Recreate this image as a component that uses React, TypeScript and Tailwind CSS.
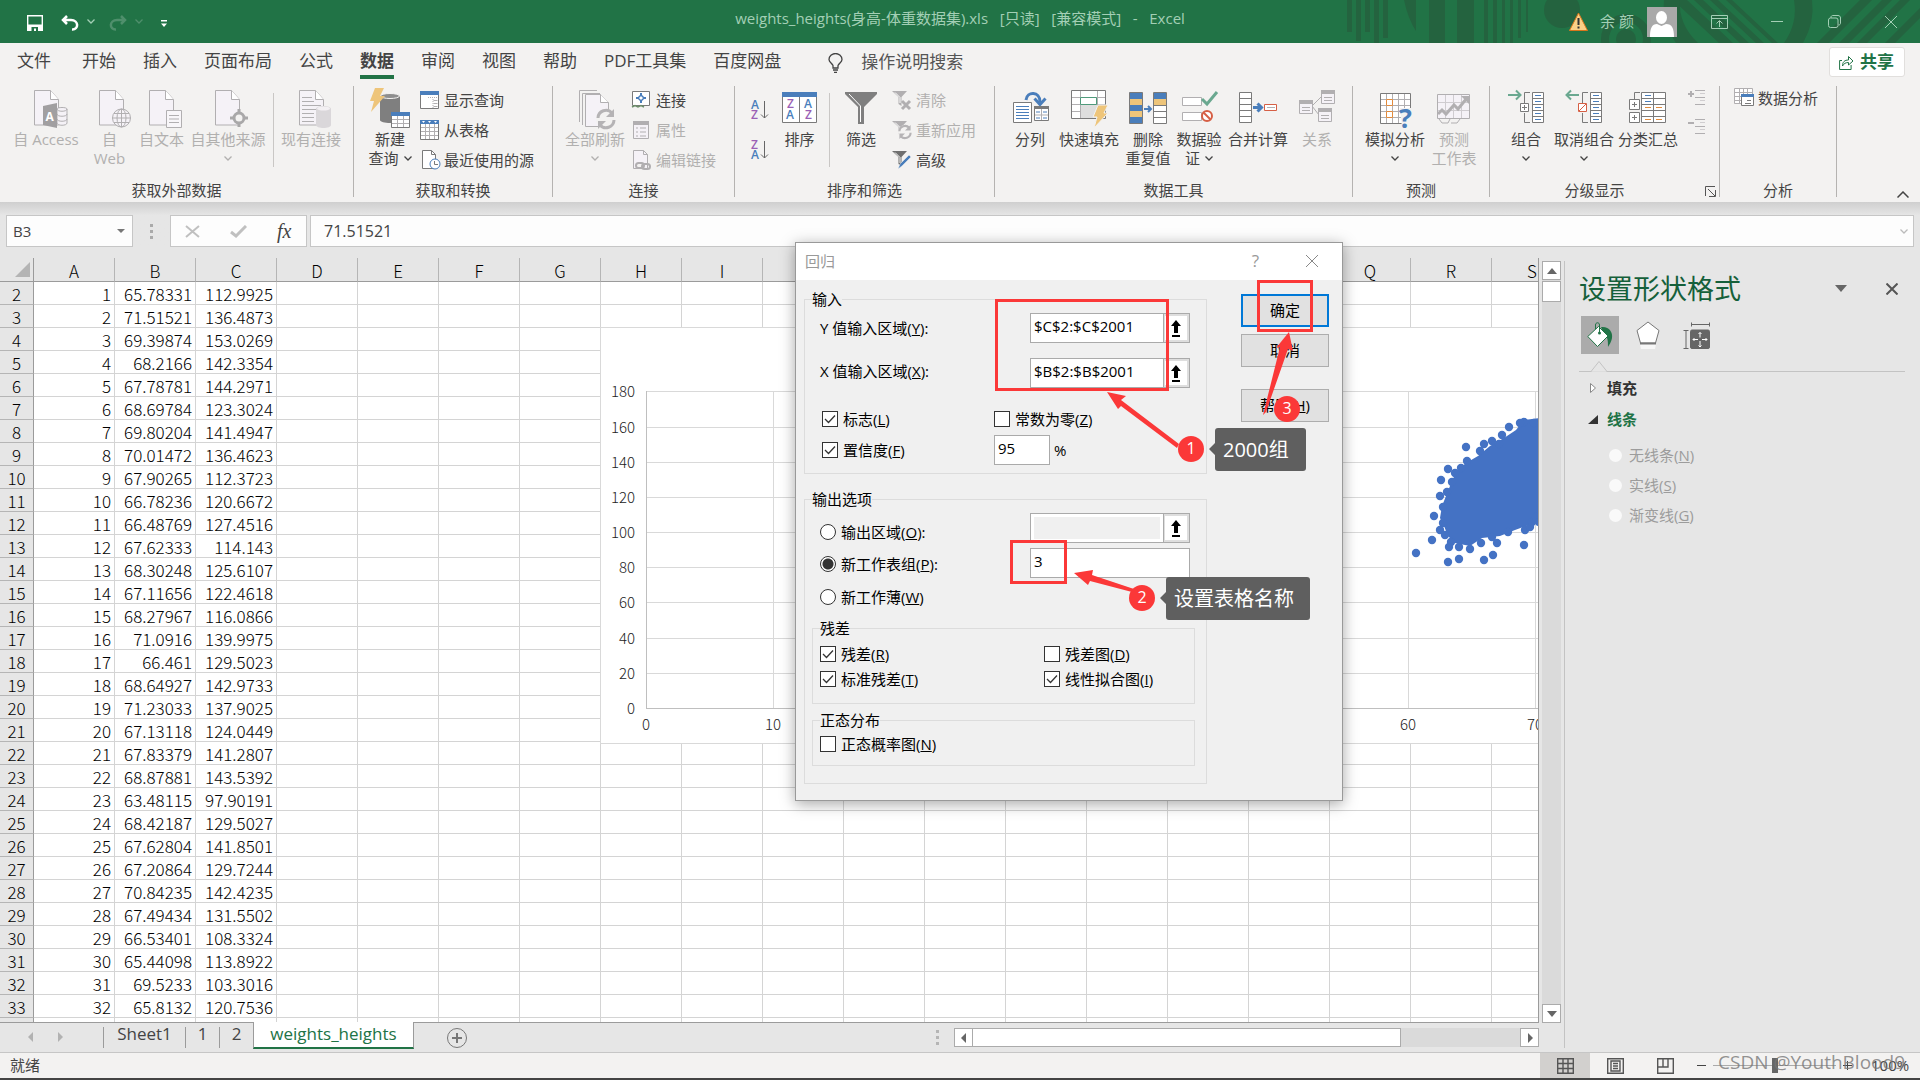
import { ReactNode, useState } from "react";
import clsx from "clsx";

const UI_FONT = "font-['Open_Sans','Noto_Sans_CJK_SC',sans-serif]";
const CELL_FONT = "font-['Noto_Sans_CJK_SC',sans-serif] font-light";

const COLUMNS = "ABCDEFGHIJKLMNOPQRS".split("");

const ROWS: [string, string][] = [
  ["65.78331", "112.9925"],
  ["71.51521", "136.4873"],
  ["69.39874", "153.0269"],
  ["68.2166", "142.3354"],
  ["67.78781", "144.2971"],
  ["68.69784", "123.3024"],
  ["69.80204", "141.4947"],
  ["70.01472", "136.4623"],
  ["67.90265", "112.3723"],
  ["66.78236", "120.6672"],
  ["66.48769", "127.4516"],
  ["67.62333", "114.143"],
  ["68.30248", "125.6107"],
  ["67.11656", "122.4618"],
  ["68.27967", "116.0866"],
  ["71.0916", "139.9975"],
  ["66.461", "129.5023"],
  ["68.64927", "142.9733"],
  ["71.23033", "137.9025"],
  ["67.13118", "124.0449"],
  ["67.83379", "141.2807"],
  ["68.87881", "143.5392"],
  ["63.48115", "97.90191"],
  ["68.42187", "129.5027"],
  ["67.62804", "141.8501"],
  ["67.20864", "129.7244"],
  ["70.84235", "142.4235"],
  ["67.49434", "131.5502"],
  ["66.53401", "108.3324"],
  ["65.44098", "113.8922"],
  ["69.5233", "103.3016"],
  ["65.8132", "120.7536"],
];

const POINTS = [
  [1524, 422], [1520, 423], [1509, 427], [1534, 423], [1502, 435], [1492, 441],
  [1484, 444], [1499, 444], [1480, 451], [1467, 461], [1461, 468], [1455, 473],
  [1452, 482], [1447, 492], [1440, 496], [1443, 507], [1434, 516], [1443, 523],
  [1440, 530], [1445, 535], [1451, 542], [1449, 547], [1459, 547], [1470, 549],
  [1481, 543], [1497, 543], [1492, 537], [1508, 532], [1525, 530], [1530, 527],
  [1532, 522], [1536, 517], [1539, 522], [1466, 447], [1448, 469], [1441, 480],
  [1432, 540], [1416, 553], [1448, 562], [1459, 559], [1484, 560], [1493, 555],
  [1524, 545],
];

/* ---------- icons ---------- */

const GREY = "#7a7a7a";
const PALE = "#b1afb1";
const BLUE = "#4a7ebb";
const ORANGE = "#e28b3c";
const RED = "#d65f45";
const SAND = "#eec57a";
const TEAL = "#6aa890";

function Icon({ children, small }: { children: ReactNode; small?: boolean }) {
  return (
    <svg
      className={clsx("shrink-0 overflow-visible", small ? "w-5 h-5" : "w-10 h-10")}
      viewBox={small ? "0 0 20 20" : "0 0 40 40"}
      fill="none"
      aria-hidden="true"
    >
      {children}
    </svg>
  );
}

function Doc({ x = 8, y = 2 }: { x?: number; y?: number }) {
  return (
    <g transform={`translate(${x} ${y})`} stroke={PALE}>
      <path d="M.5.5h16l8 9v25.500h-24z" fill="#f5f2f7" />
      <path d="M16.500.5v9h8" fill="#fff" />
    </g>
  );
}

const AccessIcon = () => (
  <Icon>
    <Doc />
    <path d="M31 21c0-2 10-2 10 0v14c0 3-10 3-10 0z" fill="#f5f2f7" stroke={PALE} />
    <path d="M31 21c0 3 10 3 10 0M31 26c0 3 10 3 10 0M31 31c0 3 10 3 10 0" stroke={PALE} />
    <path d="M17 18l14-3v25l-14-3z" fill="#a19fa1" />
    <text x="19.500" y="33" fontSize="12" fontWeight="700" fill="#fff">A</text>
  </Icon>
);

const WebIcon = () => (
  <Icon>
    <Doc x={9} />
    <circle cx="31.500" cy="30" r="9" fill="#f5f2f7" stroke={PALE} />
    <ellipse cx="31.500" cy="30" rx="4.500" ry="9" stroke={PALE} />
    <path d="M31.500 21v18M22.500 30h18M24 25.500h15M24 34.500h15" stroke={PALE} />
  </Icon>
);

const TextIcon = () => (
  <Icon>
    <Doc x={7} />
    <path d="M24.500 22.500h15v17h-15z" fill="#f8f6f9" stroke={PALE} />
    <path d="M27 27.500h10M27 31h10M27 34.500h10" stroke={PALE} />
  </Icon>
);

const SourceIcon = () => (
  <Icon>
    <Doc x={7} />
    <circle cx="31" cy="30" r="5" fill="#f3f2f1" stroke="#a9a8a9" strokeWidth="3" />
    <path d="M31 21v5M31 34v5M22 30h5M35 30h5" stroke="#a9a8a9" strokeWidth="3" />
  </Icon>
);

const ExistingIcon = () => (
  <Icon>
    <Doc />
    <path d="M11 9.500h10M11 13.500h12M11 17.500h19M11 21.500h14M11 25.500h12M11 29.500h12M11 33.500h12" stroke={PALE} />
    <path d="M25 21c0-4 15-4 15 0v16c0 4-15 4-15 0z" fill="#dad7da" />
    <ellipse cx="32.500" cy="20.500" rx="6.500" ry="2" fill="#f3f0f3" />
  </Icon>
);

const NewQueryIcon = () => (
  <Icon>
    <path d="M10 8h20v24c0 4-20 4-20 0z" fill="#7f7f7f" />
    <ellipse cx="20" cy="8" rx="9.500" ry="2.500" fill="#8e8e8e" stroke="#f3f2f1" />
    <path d="M5 0h9l-4 8h5L1 24l3-11H0z" fill={SAND} />
    <path d="M21.500 24.500h18v15h-18z" fill="#fff" stroke={GREY} />
    <path d="M21 24h19v4H21z" fill={BLUE} />
    <path d="M22 31.500h17M22 35.500h17M27.500 28v11M33.500 28v11" stroke={PALE} />
  </Icon>
);

const RefreshArrows = ({ cx, cy, s = 1 }: { cx: number; cy: number; s?: number }) => (
  <g transform={`translate(${cx} ${cy}) scale(${s})`} stroke="#b5b3b5" strokeWidth="3">
    <path d="M-8-1a8 8 0 0 1 14-5M8 1a8 8 0 0 1-14 5" />
    <path d="M8-10v8h-8zM-8 10v-8h8z" fill="#b5b3b5" stroke="none" />
  </g>
);

const RefreshAllIcon = () => (
  <Icon>
    <path d="M4.500 34V2.500H22M7.500 37V5.500H25" stroke={PALE} />
    <path d="M10.500 6.500h15l8 8v24h-23z" fill="#f5f2f7" stroke={PALE} />
    <path d="M25.500 6.500v8h8" fill="#fff" stroke={PALE} />
    <circle cx="31" cy="31" r="10" fill="#f3f2f1" />
    <RefreshArrows cx={31} cy={31} />
  </Icon>
);

const SortIcon = () => (
  <Icon>
    <path d="M2.500 4.500h34v30h-34z" fill="#fff" stroke={GREY} />
    <path d="M2 4h35v5H2z" fill={BLUE} />
    <path d="M19.500 9v25" stroke={GREY} />
    <g fontSize="12" fontWeight="600">
      <text x="7" y="20" fill="#9a5fb5">Z</text>
      <text x="6" y="31" fill={BLUE}>A</text>
      <text x="24" y="20" fill={BLUE}>A</text>
      <text x="25" y="31" fill="#9a5fb5">Z</text>
    </g>
  </Icon>
);

const FilterIcon = () => (
  <Icon>
    <path d="M4 4h32v2L23 19v17h-6V19L4 6z" fill="#7f7f7f" />
    <path d="M8 6l11.500 12v16" stroke="#fff" />
  </Icon>
);

const SplitIcon = () => (
  <Icon>
    <path d="M3.500 14.500h18v20h-18z" fill="#fff" stroke={GREY} />
    <path d="M6 18.500h13M6 21.500h13M6 24.500h13M6 27.500h13M6 30.500h13" stroke={BLUE} />
    <path d="M16 12c1-9 14-9 14 2" stroke={BLUE} strokeWidth="3" />
    <path d="M24.500 10.500l5.500 6 5.500-6" stroke={BLUE} strokeWidth="3" />
    <path d="M24.500 19.500h14v13h-14z" fill="#fff" stroke={GREY} />
    <path d="M24 18h15v3H24z" fill={GREY} />
    <path d="M31.500 21v11M25 27h13" stroke={PALE} />
    <path d="M26 24h4M33 24h4M26 30h4M33 30h4" stroke={BLUE} />
  </Icon>
);

const FlashFillIcon = () => (
  <Icon>
    <path d="M2.500 2.500h34v28h-34z" fill="#fff" stroke={GREY} />
    <path d="M3 9.500h33M3 16.500h33M3 23.500h33M11.500 3v27M28.500 3v27" stroke={PALE} />
    <path d="M12 17h16v13H12z" fill="#dedede" />
    <path d="M11.500 9.500h16v7h-16z" fill="#fff" stroke="#4f9a7b" />
    <path d="M29 17h10l-4 8h4L25 40l3-11h-4z" fill={SAND} stroke="#f3f2f1" />
  </Icon>
);

const DedupeIcon = () => (
  <Icon>
    <path d="M1.500 4.500h13v31h-13z" fill={BLUE} />
    <path d="M2 11h12v6H2zM2 23h12v6H2z" fill={SAND} />
    <path d="M25.500 4.500h13v31h-13z" fill="#fff" />
    <path d="M26 5h12v6H26z" fill={BLUE} />
    <path d="M26 11h12v6H26z" fill={SAND} />
    <path d="M26 17.500h12M26 23.500h12M26 29.500h12M1.500 4.500h13v31h-13zM25.500 4.500h13v31h-13z" stroke={GREY} />
    <path d="M16 21h7M20 18l3 3-3 3" stroke={BLUE} strokeWidth="2" />
  </Icon>
);

const ValidateIcon = () => (
  <Icon>
    <path d="M3.500 9.500h19v8h-19zM3.500 24.500h19v8h-19z" fill="#fff" stroke={PALE} />
    <path d="M23 11l5 5L38 4" stroke={TEAL} strokeWidth="3" />
    <circle cx="28" cy="28" r="5" fill="#fff" stroke={RED} strokeWidth="2" />
    <path d="M24.500 24.500l7 7" stroke={RED} strokeWidth="2" />
  </Icon>
);

const MergeIcon = () => (
  <Icon>
    <path d="M1.500 4.500h12v30h-12z" fill="#fff" stroke={GREY} />
    <path d="M2 10.500h11M2 16.500h11M2 22.500h11M2 28.500h11" stroke={GREY} />
    <path d="M15 19.500h8M19.500 15.500l4 4-4 4" stroke={BLUE} strokeWidth="3" />
    <path d="M26.500 16.500h12v6h-12z" fill="#fff" stroke={RED} />
    <path d="M29 19.500h8" stroke={PALE} />
  </Icon>
);

const RelationIcon = () => (
  <Icon>
    <path d="M15 18l10-10M15 18l7 9" stroke={PALE} />
    {[[2, 12], [24, 2], [21, 20]].map(([x, y]) => (
      <g key={x} transform={`translate(${x} ${y})`}>
        <path d="M.5.5h13v13H.5z" fill="#f5f2f7" stroke={PALE} />
        <path d="M0 0h14v4H0z" fill={PALE} />
        <path d="M3 7.500h8M3 10.500h8" stroke={PALE} />
      </g>
    ))}
  </Icon>
);

const WhatIfIcon = () => (
  <Icon>
    <path d="M5.500 5.500h30v30h-30z" fill="#fff" stroke={GREY} />
    <path d="M6 11.500h29M6 17.500h29M6 23.500h29M6 29.500h29M11.500 6v29M17.500 6v29M23.500 6v29M29.500 6v29" stroke={PALE} />
    <path d="M11.500 11.500h6v6h-6zM11.500 23.500h6v6h-6z" fill="#fff" stroke={ORANGE} />
    <path d="M25 20h14v20H27z" fill="#f3f2f1" />
    <text x="24" y="40" fontSize="27" fontWeight="700" fill={BLUE}>?</text>
  </Icon>
);

const ForecastIcon = () => (
  <Icon>
    <path d="M3.500 6.500h32v24h-32z" fill="#f5f2f7" stroke={PALE} />
    <path d="M4 14.500h31M4 22.500h31M11.500 7v23M19.500 7v23M27.500 7v23" stroke="#cfccd0" />
    <path d="M5 31l3 4h6l2-4M17 35h6l3-4" stroke={PALE} />
    <path d="M4 26l4-4 4 4 8-9 4 4 9-11" stroke={PALE} strokeWidth="3" />
    <path d="M27 8h8v8z" fill={PALE} />
  </Icon>
);

function OutlineRows() {
  return (
    <>
      <path d="M26.500 4.500h11v30h-11z" fill="#fff" stroke={GREY} />
      <path d="M27 10.500h10M27 16.500h10M27 22.500h10M27 28.500h10" stroke={GREY} />
      <path d="M29 7.500h6M29 13.500h6M29 19.500h6M29 25.500h6M29 31.500h6" stroke={BLUE} />
      <path d="M24 4.500h-5.500V15M24 34.500h-5.500V25" stroke={GREY} />
    </>
  );
}

const GroupIcon = () => (
  <Icon>
    <OutlineRows />
    <path d="M2 7h12M10 2.500L14.500 7 10 11.500" stroke={TEAL} strokeWidth="2" />
    <path d="M14.500 15.500h8v8h-8z" fill="#fff" stroke={GREY} />
    <path d="M16 19.500h5M18.500 17v5" stroke={GREY} />
  </Icon>
);

const UngroupIcon = () => (
  <Icon>
    <OutlineRows />
    <path d="M3 7h12M7 2.500L2.500 7 7 11.500" stroke={TEAL} strokeWidth="2" />
    <path d="M14.500 15.500h8v8h-8z" fill="#fff" stroke={RED} />
    <path d="M15 23l7-7" stroke={RED} />
  </Icon>
);

const SubtotalIcon = () => (
  <Icon>
    <path d="M6.500 11V4.500H12" stroke={GREY} />
    <path d="M1.500 11.500h10v10h-10zM1.500 24.500h10v10h-10zM13.500 4.500h24v30h-24z" fill="#fff" stroke={GREY} />
    <path d="M4 16.500h5M6.500 14v5M4 29.500h5M6.500 27v5M25.500 5v29M14 10.500h23M14 16.500h23M14 22.500h23M14 28.500h23" stroke={GREY} />
    <path d="M17 7.500h6M17 13.500h6" stroke={BLUE} />
    <path d="M17 19.500h6M28 19.500h6M17 31.500h6M28 31.500h6" stroke={ORANGE} />
  </Icon>
);

const ShowQueryIcon = () => (
  <Icon small>
    <path d="M.5 1.500h18v17H.5z" fill="#fff" stroke={GREY} />
    <path d="M0 1h19v4H0z" fill={BLUE} />
    <path d="M8 7.500h9M13 9v9" stroke={PALE} strokeDasharray="1 1" />
    <path d="M13.500 10.500h4M13.500 13.500h4M13.500 16.500h4" stroke={PALE} />
  </Icon>
);

const FromTableIcon = () => (
  <Icon small>
    <path d="M.5.5h18v19H.5z" fill="#fff" stroke={GREY} />
    <path d="M0 0h19v4H0z" fill={BLUE} />
    <path d="M2 1h3L3.500 3zM8 1h3L9.500 3zM14 1h3l-1.500 2z" fill="#fff" />
    <path d="M1 7.500h17M1 11.500h17M1 15.500h17M5.500 4v15M9.500 4v15M14.500 4v15" stroke={PALE} />
  </Icon>
);

const RecentIcon = () => (
  <Icon small>
    <path d="M2.500.5h9l4 4v14h-13z" fill="#fff" stroke={GREY} />
    <path d="M11.500.5v4h4" stroke={GREY} />
    <circle cx="15" cy="14" r="5" fill="#fff" stroke={BLUE} />
    <path d="M14.500 11v3.500H18" stroke={GREY} />
  </Icon>
);

const ConnectIcon = () => (
  <Icon small>
    <path d="M.5 1.500h17v14H.5z" fill="#fff" stroke={GREY} />
    <path d="M9 3v3M9 10v3M4 8h3M11 8h3" stroke={BLUE} strokeWidth="2" />
    <path d="M9 5l3 3-3 3-3-3z" fill="#fff" stroke={BLUE} strokeWidth="1.500" />
    <path d="M0 17l3-1.500L6 17l3-1.500L12 17" stroke="#6d8f6b" strokeWidth="1.500" />
  </Icon>
);

const PropertyIcon = () => (
  <Icon small>
    <path d="M1.500 1.500h15v17h-15z" fill="#f5f2f7" stroke={PALE} />
    <path d="M1 1h16v4H1z" fill={PALE} />
    <path d="M4 8h2M8 8h6M4 12h2M8 12h6M4 16h2M8 16h6" stroke={PALE} />
  </Icon>
);

const EditLinkIcon = () => (
  <Icon small>
    <path d="M1.500.5h10l4 4v14h-14z" fill="#f5f2f7" stroke={PALE} />
    <path d="M11.500.5v4h4" stroke={PALE} />
    <rect x="4" y="13" width="8" height="5" rx="2.500" fill="#f3f2f1" stroke={PALE} strokeWidth="2" />
    <rect x="10" y="14" width="8" height="5" rx="2.500" stroke={PALE} strokeWidth="2" />
  </Icon>
);

const SmallFunnel = ({ color }: { color: string }) => (
  <>
    <path d="M0 1h15l-5.500 6v9l-3-2V7z" fill={color} />
    <path d="M3 2.500l5 5V13" stroke="#fff" />
  </>
);

const ClearIcon = () => (
  <Icon small>
    <SmallFunnel color={PALE} />
    <path d="M10 11l8 8M18 11l-8 8" stroke={PALE} strokeWidth="3" />
  </Icon>
);

const ReapplyIcon = () => (
  <Icon small>
    <SmallFunnel color={PALE} />
    <circle cx="13" cy="12" r="7" fill="#f3f2f1" />
    <RefreshArrows cx={13} cy={12} s={0.7} />
  </Icon>
);

const AdvancedIcon = () => (
  <Icon small>
    <SmallFunnel color="#6f6f6f" />
    <path d="M6 19l2-5 9-9 2 2-9 9z" fill={BLUE} stroke="#f3f2f1" strokeWidth=".5" />
  </Icon>
);

function SortLetters({ top, bottom }: { top: string; bottom: string }) {
  const color = (l: string) => (l === "A" ? BLUE : "#9a5fb5");
  return (
    <Icon small>
      <g fontSize="12" fontWeight="600">
        <text x="1" y="9" fill={color(top)}>{top}</text>
        <text x="1" y="19" fill={color(bottom)}>{bottom}</text>
      </g>
      <path d="M14.500 1v17M11 14.500l3.500 3.500 3.500-3.500" stroke="#666" />
    </Icon>
  );
}

const LevelIcon = ({ plus }: { plus?: boolean }) => (
  <Icon small>
    <path d="M1 6h6" stroke={PALE} strokeWidth="2" />
    {plus && <path d="M4 3v6" stroke={PALE} strokeWidth="2" />}
    <path d="M8 2.500h10M8 9.500h10M8 16.500h10" stroke={PALE} />
    <path d="M13 5.500h5M13 12.500h5" stroke="#d0ced0" />
  </Icon>
);

const AnalysisIcon = () => (
  <Icon small>
    <path d="M.5.5h18v15H.5z" fill="#fff" stroke={PALE} />
    <path d="M1 4.500h17M1 8.500h17M1 12.500h17M5.500 1v15M9.500 1v15M13.500 1v15" stroke={PALE} />
    <path d="M7.500 6.500h12v11h-12z" fill="#fff" stroke={GREY} />
    <path d="M7 6h13v3H7z" fill={BLUE} />
    <path d="M13 12.500h4M11 15.500h6" stroke={GREY} />
  </Icon>
);

const Chevron = ({ className = "" }: { className?: string }) => (
  <svg className={clsx("inline-block w-2 h-[5px]", className)} viewBox="0 0 8 5" fill="none" aria-hidden="true">
    <path d="M.5.5L4 4 7.500.5" stroke="currentColor" strokeWidth="1.300" />
  </svg>
);

/* ---------- ribbon ---------- */

interface BigButtonProps {
  icon: ReactNode;
  lines: string[];
  width: string;
  disabled?: boolean;
  arrow?: boolean;
}

function BigButton({ icon, lines, width, disabled, arrow }: BigButtonProps) {
  return (
    <button
      type="button"
      disabled={disabled}
      className={clsx(
        "flex flex-col items-center shrink-0 whitespace-nowrap text-[15px] leading-[19px] disabled:text-[#b1b0af]",
        width
      )}
    >
      {icon}
      <span className="mt-[2px]">{lines[0]}</span>
      <span className="flex items-center justify-center gap-[5px] h-[19px]">
        {lines[1]}
        {arrow && <Chevron />}
      </span>
    </button>
  );
}

interface SmallButtonProps {
  icon: ReactNode;
  label: string;
  disabled?: boolean;
}

function SmallButton({ icon, label, disabled }: SmallButtonProps) {
  return (
    <button
      type="button"
      disabled={disabled}
      className="flex items-center gap-[4px] h-[30px] whitespace-nowrap text-[15px] leading-5 disabled:text-[#b1b0af]"
    >
      {icon}
      {label}
    </button>
  );
}

interface GroupProps {
  title: string;
  width: string;
  inset?: string;
  children: ReactNode;
  launcher?: boolean;
}

function RibbonGroup({ title, width, inset = "pl-2", children, launcher }: GroupProps) {
  return (
    <section
      className={clsx("relative flex flex-col shrink-0 h-[111px] border-r border-[#b5b3b1]", width)}
    >
      <div className={clsx("flex items-start grow pt-[2px]", inset)}>{children}</div>
      <h2 className={clsx("text-center text-[15px] leading-[19px] -mb-[3px]", launcher && "pr-5")}>
        {title}
      </h2>
      {launcher && (
        <button type="button" aria-label="更多" className="absolute right-[3px] bottom-0">
          <svg className="w-[11px] h-[11px]" viewBox="0 0 11 11" fill="none" stroke="#555">
            <path d="M.5 10V.5H10M3 3l7 7M10.500 4v6.500H4" />
          </svg>
        </button>
      )}
    </section>
  );
}

const Divider = () => <div className="w-px h-[74px] mt-[5px] bg-[#c9c7c5] shrink-0" />;

function Ribbon() {
  return (
    <div className="flex items-start h-[118px] pt-[2px] relative">
      <RibbonGroup title="获取外部数据" width="w-[354px]">
        <BigButton icon={<AccessIcon />} lines={["自 Access"]} width="w-[76px]" disabled />
        <BigButton icon={<WebIcon />} lines={["自", "Web"]} width="w-[51px]" disabled />
        <BigButton icon={<TextIcon />} lines={["自文本"]} width="w-[53px]" disabled />
        <BigButton icon={<SourceIcon />} lines={["自其他来源"]} width="w-[80px] mr-[5px]" disabled arrow />
        <Divider />
        <BigButton icon={<ExistingIcon />} lines={["现有连接"]} width="w-[74px]" disabled />
      </RibbonGroup>

      <RibbonGroup title="获取和转换" width="w-[199px]">
        <BigButton icon={<NewQueryIcon />} lines={["新建", "查询"]} width="w-[56px]" arrow />
        <div className="flex flex-col ml-[2px] -mt-[3px]">
          <SmallButton icon={<ShowQueryIcon />} label="显示查询" />
          <SmallButton icon={<FromTableIcon />} label="从表格" />
          <SmallButton icon={<RecentIcon />} label="最近使用的源" />
        </div>
      </RibbonGroup>

      <RibbonGroup title="连接" width="w-[182px]">
        <BigButton icon={<RefreshAllIcon />} lines={["全部刷新"]} width="w-[68px]" disabled arrow />
        <div className="flex flex-col ml-[3px] -mt-[3px]">
          <SmallButton icon={<ConnectIcon />} label="连接" />
          <SmallButton icon={<PropertyIcon />} label="属性" disabled />
          <SmallButton icon={<EditLinkIcon />} label="编辑链接" disabled />
        </div>
      </RibbonGroup>

      <RibbonGroup title="排序和筛选" width="w-[260px]" inset="pl-[15px]">
        <div className="flex flex-col gap-5 pt-3">
          <button type="button" aria-label="升序">
            <SortLetters top="A" bottom="Z" />
          </button>
          <button type="button" aria-label="降序">
            <SortLetters top="Z" bottom="A" />
          </button>
        </div>
        <BigButton icon={<SortIcon />} lines={["排序"]} width="w-[59px]" />
        <Divider />
        <BigButton icon={<FilterIcon />} lines={["筛选"]} width="w-[62px]" />
        <div className="flex flex-col -mt-[3px]">
          <SmallButton icon={<ClearIcon />} label="清除" disabled />
          <SmallButton icon={<ReapplyIcon />} label="重新应用" disabled />
          <SmallButton icon={<AdvancedIcon />} label="高级" />
        </div>
      </RibbonGroup>

      <RibbonGroup title="数据工具" width="w-[358px]" inset="pl-[7px]">
        <BigButton icon={<SplitIcon />} lines={["分列"]} width="w-[56px]" />
        <BigButton icon={<FlashFillIcon />} lines={["快速填充"]} width="w-[62px]" />
        <BigButton icon={<DedupeIcon />} lines={["删除", "重复值"]} width="w-[56px]" />
        <BigButton icon={<ValidateIcon />} lines={["数据验", "证"]} width="w-[46px]" arrow />
        <BigButton icon={<MergeIcon />} lines={["合并计算"]} width="w-[72px]" />
        <BigButton icon={<RelationIcon />} lines={["关系"]} width="w-[46px]" disabled />
      </RibbonGroup>

      <RibbonGroup title="预测" width="w-[137px]">
        <BigButton icon={<WhatIfIcon />} lines={["模拟分析"]} width="w-[68px]" arrow />
        <BigButton icon={<ForecastIcon />} lines={["预测", "工作表"]} width="w-[50px]" disabled />
      </RibbonGroup>

      <RibbonGroup title="分级显示" width="w-[230px]" inset="pl-[10px]" launcher>
        <BigButton icon={<GroupIcon />} lines={["组合"]} width="w-[52px]" arrow />
        <BigButton icon={<UngroupIcon />} lines={["取消组合"]} width="w-[64px]" arrow />
        <BigButton icon={<SubtotalIcon />} lines={["分类汇总"]} width="w-[64px]" />
        <div className="flex flex-col gap-[9px] ml-[7px]">
          <button type="button" disabled aria-label="显示明细数据">
            <LevelIcon plus />
          </button>
          <button type="button" disabled aria-label="隐藏明细数据">
            <LevelIcon />
          </button>
        </div>
      </RibbonGroup>

      <RibbonGroup title="分析" width="w-[117px]" inset="pl-[14px]">
        <div className="-mt-[5px]">
          <SmallButton icon={<AnalysisIcon />} label="数据分析" />
        </div>
      </RibbonGroup>

      <button type="button" aria-label="折叠功能区" className="absolute right-[11px] bottom-1 text-[#444]">
        <svg className="w-3 h-[7px]" viewBox="0 0 12 7" fill="none" stroke="currentColor" strokeWidth="1.500">
          <path d="M.5 6.500L6 1l5.500 5.500" />
        </svg>
      </button>
    </div>
  );
}

/* ---------- title bar and tabs ---------- */

function TitleArt() {
  return (
    <svg className="absolute right-0 top-0 w-[580px] h-[43px]" viewBox="1340 0 580 43" aria-hidden="true">
      <g fill="#24633f">
        <path d="M1347 0h5v32h-5zM1356 0h5v41h-5zM1365 0h5v32h-5zM1374 0h5v43h-5zM1383 0h5v38h-5z" />
        <path d="M1404 0h12v31q-8-12-12-31zM1429 0h16v43h-16zM1457 0h17v43h-17zM1484 0h4v43h-4zM1493 0h4v43h-4z" />
        <path d="M1502 0h3v43h-3zM1510 0h3v43h-3zM1518 0h3v38h-3zM1526 0h2v32h-2z" />
        <circle cx="1562" cy="10" r="18" />
        <circle cx="1626" cy="39" r="10" />
        <path d="M1673 0h14l46 43h-14zM1694 0h9l46 43h-9zM1710 0h8l46 43h-8zM1726 0h6l46 43h-6z" />
        <path d="M1794 0h18q3 22-9 43h-19q14-20 10-43z" />
        <path d="M1860 0h12l-43 43h-12zM1882 0h10l-43 43h-10zM1900 0h10l-43 43h-10zM1920 8v10l-25 25h-10z" />
        <path d="M1664 0h16q-2 24 18 43h-22q-14-20-12-43z" />
      </g>
      <circle cx="1626" cy="39" r="21" fill="none" stroke="#24633f" strokeWidth="8" />
    </svg>
  );
}

function TitleBar() {
  return (
    <header className="relative flex items-center h-[43px] shrink-0 bg-[#217346] text-[#a3cfb5]">
      <TitleArt />
      <div className="flex items-center pl-[27px] text-white">
        <button type="button" aria-label="保存">
          <svg className="w-4 h-4 mt-[3px]" viewBox="0 0 16 16" fill="none">
            <path d="M.7.7h14.600v14.600H.7z" stroke="#fff" strokeWidth="1.400" />
            <path d="M1 9.500h14V15H1z" fill="#fff" />
            <path d="M4.500 12h6.500v4H9v-2.500H7V16H4.500z" fill="#217346" />
          </svg>
        </button>
        <button type="button" aria-label="撤消" className="flex items-center gap-2 ml-[18px]">
          <svg className="w-[18px] h-4 mt-[3px]" viewBox="0 0 18 16" fill="none" stroke="#fff" strokeWidth="2.500">
            <path d="M6 1L2 5l4 4M2 5h8c8 0 8 10 1 9.500" />
          </svg>
          <Chevron className="text-[#a3cfb5]" />
        </button>
        <button type="button" aria-label="恢复" disabled className="flex items-center gap-2 ml-[14px] text-[#4f8f6c]">
          <svg className="w-[18px] h-4 mt-[3px]" viewBox="0 0 18 16" fill="none" stroke="currentColor" strokeWidth="2.500">
            <path d="M12 1l4 4-4 4M16 5H8c-8 0-8 10-1 9.500" />
          </svg>
          <Chevron />
        </button>
        <button type="button" aria-label="自定义快速访问工具栏" className="ml-[18px]">
          <svg className="w-[6px] h-[7px] mt-1" viewBox="0 0 6 7" fill="#fff">
            <path d="M0 0h6v1.500H0zM0 3.500h6L3 7z" />
          </svg>
        </button>
      </div>

      <h1 className="absolute inset-x-0 top-2 text-center text-[15px] leading-5 whitespace-pre">
        weights_heights(身高-体重数据集).xls   [只读]   [兼容模式]   -   Excel
      </h1>

      <div className="relative flex items-center ml-auto pr-[23px]">
        <svg className="w-[19px] h-[19px] mr-[12px]" viewBox="0 0 19 19" aria-hidden="true">
          <path d="M9.500 1L18.500 18.500H.5z" fill="#fbd086" stroke="#d8761c" strokeLinejoin="round" />
          <path d="M8.500 6h2v7h-2zM8.500 14.500h2v2h-2z" fill="#333" />
        </svg>
        <span className="text-[15px] leading-5 mr-[13px] -mt-[2px]">余 颜</span>
        <svg className="w-[30px] h-[30px] mr-[34px]" viewBox="0 0 30 30" aria-hidden="true">
          <path d="M0 0h30v30H0z" fill="#a9a9a9" />
          <ellipse cx="14.500" cy="10.500" rx="5.500" ry="6.500" fill="#fff" />
          <path d="M3 30c0-9 2-13 7-13l4.500 2 4.500-2c6 0 8 4 8 13z" fill="#fff" />
        </svg>
        <button type="button" aria-label="功能区显示选项" className="mr-[43px]">
          <svg className="w-[17px] h-[14px]" viewBox="0 0 17 14" fill="none" stroke="currentColor">
            <path d="M.5.5h16v13H.5zM1 3.500h15M8.500 12V6M5.500 8.500l3-3 3 3" />
          </svg>
        </button>
        <button type="button" aria-label="最小化" className="mr-[45px]">
          <svg className="w-3 h-3" viewBox="0 0 12 12" stroke="currentColor">
            <path d="M0 5.500h12" />
          </svg>
        </button>
        <button type="button" aria-label="还原" className="mr-[44px]">
          <svg className="w-[13px] h-[13px]" viewBox="0 0 13 13" fill="none" stroke="currentColor">
            <rect x=".5" y="3" width="9.500" height="9.500" rx="2" />
            <path d="M3 3V2C3 1 4 .5 5 .5h5c1.500 0 2.500 1 2.500 2.500v5c0 1-.5 2-2 2" />
          </svg>
        </button>
        <button type="button" aria-label="关闭">
          <svg className="w-3 h-3" viewBox="0 0 12 12" stroke="currentColor">
            <path d="M0 0l12 12M12 0L0 12" />
          </svg>
        </button>
      </div>
    </header>
  );
}

const TABS = ["开始", "插入", "页面布局", "公式", "数据", "审阅", "视图", "帮助", "PDF工具集", "百度网盘"];

function TabRow() {
  return (
    <nav className="flex items-start h-[41px] pl-[17px] pr-[15px] text-[17px] leading-6 whitespace-nowrap">
      <button type="button" className="mt-[6px] mr-[31px]">文件</button>
      <div className="flex gap-[27px] mt-[6px]">
        {TABS.map((tab) => (
          <button
            key={tab}
            type="button"
            className={clsx(
              "h-[30px] flex items-start",
              tab === "数据" && "font-bold border-b-4 border-[#217346]"
            )}
          >
            {tab}
          </button>
        ))}
      </div>
      <svg className="w-[15px] h-5 mt-[10px] ml-[47px] mr-[18px]" viewBox="0 0 15 20" fill="none" stroke="#444" strokeWidth="1.300" aria-hidden="true">
        <path d="M5 15v-2.500C4 10.500 1 9 1 6.500a6.500 6 0 0 1 13 0c0 2.500-3 4-4 6V15zM5 17h5M6 19.300h3" />
      </svg>
      <button type="button" className="mt-[7px] text-[#555]">操作说明搜索</button>
      <button
        type="button"
        className="flex items-center gap-[6px] ml-auto mt-1 h-[30px] w-[76px] px-[9px] bg-white border border-[#e1dfdd] rounded-[3px] text-[#217346] font-bold"
      >
        <svg className="w-[15px] h-[15px]" viewBox="0 0 15 15" fill="none" stroke="currentColor" aria-hidden="true">
          <path d="M3 5.500H.6v9h11.500V10M3.500 11c0-4 2-6 6-6V1.500L14 6l-4.500 4V7.500c-3 0-4.500 1-6 3.500z" />
        </svg>
        共享
      </button>
    </nav>
  );
}

function FormulaBar() {
  return (
    <div className="flex h-[45px] pt-[13px] px-[6px] bg-gradient-to-b from-[#cfcfcf] to-[#e6e6e6] to-30% shrink-0">
      <div className="flex items-center w-[127px] h-8 bg-[#fdfdfd] border border-[#c6c6c6]">
        <input aria-label="名称框" defaultValue="B3" className="w-0 grow pl-[6px] text-[15px] outline-none" />
        <svg className="w-2 h-1 mr-[7px]" viewBox="0 0 8 4" fill="#777" aria-hidden="true">
          <path d="M0 0h8L4 4z" />
        </svg>
      </div>
      <div className="flex flex-col justify-center gap-[3px] h-8 w-[37px] items-center shrink-0">
        <i className="size-[3px] bg-[#aaa]" />
        <i className="size-[3px] bg-[#aaa]" />
        <i className="size-[3px] bg-[#aaa]" />
      </div>
      <div className="flex items-center gap-[30px] w-[137px] h-8 pl-[14px] shrink-0 bg-[#fdfdfd] border border-[#c6c6c6]">
        <button type="button" aria-label="取消" disabled>
          <svg className="w-[15px] h-[13px]" viewBox="0 0 15 13" stroke="#c0c0c0" strokeWidth="2">
            <path d="M1 1l13 11M14 1L1 12" />
          </svg>
        </button>
        <button type="button" aria-label="输入" disabled>
          <svg className="w-[17px] h-[13px]" viewBox="0 0 17 13" fill="none" stroke="#c0c0c0" strokeWidth="3">
            <path d="M1 7l5 4L16 1" />
          </svg>
        </button>
        <button
          type="button"
          aria-label="插入函数"
          className="font-['Liberation_Serif',serif] italic text-[20px] leading-5 text-[#444]"
        >
          fx
        </button>
      </div>
      <div className="flex items-center grow ml-[3px] h-8 bg-[#fdfdfd] border border-[#c6c6c6]">
        <input aria-label="编辑栏" defaultValue="71.51521" className="w-0 grow pl-[13px] pb-px text-[16px] outline-none" />
        <Chevron className="mr-[5px] text-[#bbb]" />
      </div>
    </div>
  );
}

/* ---------- sheet ---------- */

function Sheet() {
  return (
    <table className={clsx("table-fixed w-[1573px] border-separate border-spacing-0 text-[17px] leading-5 text-black", CELL_FONT)}>
      <thead>
        <tr className="h-6">
          <th className="w-[34px] p-0 border-r border-b border-[#9b9b9b] bg-[#e6e6e6]">
            <svg className="ml-[15px] w-[15px] h-[15px]" viewBox="0 0 15 15" fill="#b4b4b4" aria-hidden="true">
              <path d="M15 0v15H0z" />
            </svg>
          </th>
          {COLUMNS.map((c) => (
            <th
              key={c}
              className="w-[81px] p-0 pt-[2px] h-6 font-light border-r border-b border-r-[#b5b5b5] border-b-[#9b9b9b] bg-[#e6e6e6]"
            >
              {c}
            </th>
          ))}
        </tr>
      </thead>
      <tbody>
        {[...ROWS, ["", ""]].map(([height, weight], i) => (
          <tr key={i} className="h-[23px]">
            <th className="p-0 pt-[2px] h-[23px] font-light border-r border-b border-r-[#9b9b9b] border-b-[#b5b5b5] bg-[#e6e6e6]">
              {height && i + 2}
            </th>
            {COLUMNS.map((c, n) => (
              <td key={c} className="p-0 pt-[2px] pr-[3px] h-[23px] text-right border-r border-b border-[#d4d4d4] bg-white">
                {n === 0 && height && i + 1}
                {n === 1 && height}
                {n === 2 && weight}
              </td>
            ))}
          </tr>
        ))}
      </tbody>
    </table>
  );
}

function ScatterChart() {
  const ticksY = [391, 427, 462, 497, 532, 567, 602, 638, 673, 708];
  return (
    <svg
      className={clsx("absolute left-[600px] top-[69px] w-[940px] h-[417px] text-[15px]", CELL_FONT)}
      viewBox="600 327 940 417"
      role="img"
      aria-label="散点图"
    >
      <path d="M600.500 327.500h950v416h-950z" fill="#fff" stroke="#d9d9d9" />
      {ticksY.map((y, i) => (
        <g key={y}>
          <path d={`M646 ${y + 0.5}h894`} stroke={i === 9 ? "#bfbfbf" : "#d9d9d9"} />
          <text x="635" y={y + 6} textAnchor="end" fill="#222">
            {180 - i * 20}
          </text>
        </g>
      ))}
      {[0, 1, 2, 3, 4, 5, 6, 7].map((i) => (
        <g key={i}>
          <path d={`M${646.5 + i * 127} 391v317`} stroke={i === 0 ? "#bfbfbf" : "#d9d9d9"} />
          <text x={646 + i * 127} y="730" textAnchor="middle" fill="#222">
            {i * 10}
          </text>
        </g>
      ))}
      <g fill="#4472c4">
        <path d="M1540 418L1524 420 1516 430 1504 438 1490 446 1478 456 1466 463 1456 472 1450 486 1446 496 1442 506 1440 518 1444 526 1448 536 1455 543 1470 546 1482 538 1500 536 1515 530 1526 526 1534 520 1540 516z" />
        {POINTS.map(([x, y]) => (
          <circle key={`${x}-${y}`} cx={x} cy={y} r="4.200" />
        ))}
      </g>
    </svg>
  );
}

const Triangle = ({ d }: { d: string }) => (
  <svg className="w-[10px] h-[10px]" viewBox="0 0 10 10" fill="#666" aria-hidden="true">
    <path d={d} />
  </svg>
);

const SCROLL_BTN = "flex items-center justify-center size-[19px] shrink-0 bg-white border border-[#ababab]";
const TAB_BTN = "h-[21px] border-l border-[#9b9b9b] leading-[14px] pb-[7px]";

function SheetTabs() {
  return (
    <div className="flex items-start h-[30px] shrink-0 border-t border-[#9b9b9b] text-[17px] leading-[22px] text-[#444] mr-[25px]">
      <div className="flex gap-[19px] w-[103px] pl-[26px] pt-[9px] opacity-40 shrink-0">
        <Triangle d="M7 0v10L2 5z" />
        <Triangle d="M3 0v10l5-5z" />
      </div>
      <div className="flex mt-1 h-[21px] items-center">
        <button type="button" className={clsx("w-[82px]", TAB_BTN)}>Sheet1</button>
        <button type="button" className={clsx("w-[34px]", TAB_BTN)}>1</button>
        <button type="button" className={clsx("w-[34px]", TAB_BTN)}>2</button>
      </div>
      <button
        type="button"
        className="-mt-px w-[161px] h-[27px] bg-white border-x border-b-2 border-x-[#9b9b9b] border-b-[#217346] text-[#217346] pb-[2px]"
      >
        weights_heights
      </button>
      <button type="button" aria-label="新工作表" className="ml-[33px] mt-[5px]">
        <svg className="w-5 h-5" viewBox="0 0 20 20" fill="none" stroke="#777">
          <circle cx="10" cy="10" r="9.500" />
          <path d="M10 5v10M5 10h10" strokeWidth="2" />
        </svg>
      </button>
      <div className="ml-auto mt-[7px] flex flex-col gap-[3px] mr-[15px]">
        <i className="size-[3px] bg-[#b5b5b5]" />
        <i className="size-[3px] bg-[#b5b5b5]" />
        <i className="size-[3px] bg-[#b5b5b5]" />
      </div>
      <div className="flex w-[585px] mt-[5px] h-[19px] bg-[#dadada]">
        <button type="button" aria-label="向左滚动" className={SCROLL_BTN}>
          <Triangle d="M7 0v10L2 5z" />
        </button>
        <div className="w-[428px] bg-white border border-l-0 border-[#ababab]" />
        <button type="button" aria-label="向右滚动" className={clsx(SCROLL_BTN, "ml-auto")}>
          <Triangle d="M3 0v10l5-5z" />
        </button>
      </div>
    </div>
  );
}

/* ---------- side panel ---------- */

function FormatPanel() {
  return (
    <aside className="w-[356px] shrink-0 mt-[14px] mb-1 border-l border-[#c3c3c3] pl-[14px] pr-[15px]">
      <div className="flex items-center h-[55px]">
        <h2 className="text-[27px] leading-8 text-[#15603a]">设置形状格式</h2>
        <button type="button" aria-label="任务窗格选项" className="ml-auto mr-[39px]">
          <svg className="w-3 h-[7px]" viewBox="0 0 12 7" fill="#666"><path d="M0 0h12L6 7z" /></svg>
        </button>
        <button type="button" aria-label="关闭窗格" className="mr-[7px]">
          <svg className="w-3 h-3" viewBox="0 0 12 12" stroke="#555" strokeWidth="2"><path d="M.5.5l11 11M11.500.5L.5 11.500" /></svg>
        </button>
      </div>
      <div className="flex items-center pl-[2px]">
        <button type="button" aria-label="填充与线条" className="flex items-center justify-center w-[38px] h-[38px] bg-[#ababab]">
          <svg className="w-[26px] h-[26px]" viewBox="0 0 26 26" fill="none">
            <path d="M14 5c8-1 12 5 11 11-1 5-3 7-4 9 0-6 0-10-4-13z" fill="#217346" />
            <path d="M11.500 4.500L21 14 10.500 24.500.8 14.500z" fill="#fff" stroke="#217346" />
            <path d="M8.500 7V3c0-3 4-3 4 0v8" stroke="#217346" />
            <circle cx="12.500" cy="11" r="1.500" fill="#217346" />
          </svg>
        </button>
        <button type="button" aria-label="效果" className="ml-[17px]">
          <svg className="w-6 h-7" viewBox="0 0 24 28" fill="none">
            <path d="M4 23h16l-1 5H5z" fill="#f7f7f7" />
            <path d="M12 1l11 8.500L19.500 22h-15L1 9.500z" fill="#fff" stroke="#777" />
            <path d="M4 22.500h16" stroke="#777" strokeWidth="2" />
          </svg>
        </button>
        <button type="button" aria-label="大小与属性" className="ml-[23px]">
          <svg className="w-[27px] h-[27px]" viewBox="0 0 27 27" fill="none" stroke="#666">
            <path d="M8.500.5v4M26.500.5v4M9 2.500h17M.5 8.500h5M.5 26.500h5M3 9v17" />
            <rect x="7.500" y="8" width="19" height="18.500" rx="1.500" fill="#666" />
            <path d="M17 10.500v5M17 25v-6M10 17.500h5M24 17.500h-5M15.500 12l1.500-1.500 1.500 1.500M15.500 23.500L17 25l1.500-1.500M11.500 16L10 17.500l1.500 1.500M22.500 16l1.500 1.500-1.500 1.500" stroke="#fff" />
          </svg>
        </button>
      </div>
      <div className="relative mt-[17px] border-t border-[#c3c3c3]">
        <svg className="absolute left-3 -top-[11px] w-4 h-[11px]" viewBox="0 0 16 11" fill="#e6e6e6" stroke="#c3c3c3">
          <path d="M0 10.500L8 .5l8 10" />
          <path d="M1 11h14" stroke="#e6e6e6" />
        </svg>
      </div>
      <button type="button" className="flex items-center h-8 pl-[11px] text-[15px] font-bold text-[#333]">
        <svg className="w-[6px] h-[10px] mr-[11px]" viewBox="0 0 6 10" fill="#fff" stroke="#888">
          <path d="M.5.5L5.500 5 .5 9.500z" />
        </svg>
        填充
      </button>
      <button type="button" className="flex items-center h-[31px] pl-[9px] text-[15px] font-bold text-[#217346]">
        <svg className="w-[10px] h-[9px] mr-[9px]" viewBox="0 0 10 9" fill="#333">
          <path d="M10 0v9H0z" />
        </svg>
        线条
      </button>
      <div className="flex flex-col pl-[30px] mt-[5px] text-[15px] text-[#9c9c9c]">
        {[["无线条", "N"], ["实线", "S"], ["渐变线", "G"]].map(([name, key]) => (
          <label key={key} className="flex items-center gap-[7px] h-[30px]">
            <input type="radio" name="line" disabled className="appearance-none size-[13px] rounded-full bg-[#f9f9f9]" />
            <span>{name}(<u>{key}</u>)</span>
          </label>
        ))}
      </div>
    </aside>
  );
}

/* ---------- regression dialog ---------- */

interface FieldProps {
  label: string;
  hotkey: string;
  suffix?: string;
  checked?: boolean;
  className?: string;
}

function Check({ label, hotkey, checked, className }: FieldProps) {
  return (
    <label className={clsx("flex items-center gap-[5px]", className)}>
      <span className="relative size-4">
        <input
          type="checkbox"
          defaultChecked={checked}
          className="peer block appearance-none size-4 bg-white border border-[#333]"
        />
        <svg className="hidden peer-checked:block absolute inset-0 pointer-events-none" viewBox="0 0 16 16" fill="none" stroke="#333" strokeWidth="1.300">
          <path d="M3 8l3.500 3.500L13 4.500" />
        </svg>
      </span>
      <span>{label}(<u>{hotkey}</u>)</span>
    </label>
  );
}

function Radio({ label, hotkey, suffix, checked, className }: FieldProps) {
  return (
    <label className={clsx("flex items-center gap-[5px]", className)}>
      <input
        type="radio"
        name="output"
        defaultChecked={checked}
        className="appearance-none size-4 rounded-full bg-white border border-[#333] checked:bg-[radial-gradient(circle,#333_5px,white_6px)]"
      />
      <span>{label}(<u>{hotkey}</u>){suffix}</span>
    </label>
  );
}

function RangeInput({ id, value, label, disabled }: { id: string; value: string; label: string; disabled?: boolean }) {
  return (
    <div className="flex w-[160px] h-[30px]">
      <input
        id={id}
        aria-label={label}
        defaultValue={value}
        disabled={disabled}
        className="w-[134px] pl-[3px] pb-1 bg-white border border-[#aaa] disabled:shadow-[inset_0_0_0_3px_white] disabled:bg-[#f0f0f0]"
      />
      <button type="button" aria-label="选择区域" className="flex items-center justify-center w-[27px] -ml-px bg-white border-[3px] border-l-2 border-[#dedede] outline outline-1 -outline-offset-1 outline-[#aaa]">
        <svg className="w-3 h-[17px]" viewBox="0 0 12 17">
          <path d="M6 0l5 6H8v7H4V6H1zM2 15h8v2H2z" fill="#000" />
        </svg>
      </button>
    </div>
  );
}

const DIALOG_BTN = "h-[33px] pb-[2px] bg-[#e1e1e1] border border-[#adadad]";
const LEGEND = "leading-5 h-5";

function RegressionDialog() {
  return (
    <div
      role="dialog"
      aria-label="回归"
      className="absolute left-[795px] top-[242px] w-[548px] h-[559px] bg-[#f0f0f0] border border-[#999] shadow-[0_3px_14px_rgba(0,0,0,0.35)] text-[15px] leading-5 text-black"
    >
      <div className="flex items-center h-[37px] pl-[9px] pr-6 pb-px bg-white text-[#999]">
        <span className="grow">回归</span>
        <button type="button" aria-label="帮助" className="mr-[47px] text-[17px]">?</button>
        <button type="button" aria-label="关闭">
          <svg className="w-3 h-3" viewBox="0 0 12 12" stroke="#888"><path d="M0 0l12 12M12 0L0 12" /></svg>
        </button>
      </div>
      <div className="flex items-start pl-2 pr-[13px] pt-[9px]">
        <div className="w-[403px] shrink-0">
          <fieldset className="border border-[#dcdcdc] px-[15px] pb-2">
            <legend className={clsx(LEGEND, "-ml-2")}>输入</legend>
            <div className="flex items-center mt-1">
              <label htmlFor="y-range" className="w-[210px]">Y 值输入区域(<u>Y</u>):</label>
              <RangeInput id="y-range" label="Y 值输入区域" value="$C$2:$C$2001" />
            </div>
            <div className="flex items-center mt-[15px]">
              <label htmlFor="x-range" className="w-[210px] pb-1">X 值输入区域(<u>X</u>):</label>
              <RangeInput id="x-range" label="X 值输入区域" value="$B$2:$B$2001" />
            </div>
            <div className="flex items-center mt-[21px] pl-[2px] h-5">
              <Check label="标志" hotkey="L" checked className="w-[172px]" />
              <Check label="常数为零" hotkey="Z" />
            </div>
            <div className="flex items-center mt-[6px] pl-[2px]">
              <Check label="置信度" hotkey="F" checked className="w-[172px]" />
              <input aria-label="置信度百分比" defaultValue="95" className="w-14 h-[30px] pl-[3px] pb-1 bg-white border border-[#aaa]" />
              <span className="ml-1">%</span>
            </div>
          </fieldset>

          <fieldset className="border border-[#dcdcdc] pb-[17px] mt-[15px]">
            <legend className={clsx(LEGEND, "ml-[7px]")}>输出选项</legend>
            <div className="pl-[15px]">
              <div className="flex items-center mt-1">
                <Radio label="输出区域" hotkey="O" suffix=":" className="w-[210px] pt-[7px]" />
                <RangeInput id="out-range" label="输出区域" value="" disabled />
              </div>
              <div className="flex items-center mt-[5px]">
                <Radio label="新工作表组" hotkey="P" suffix=":" checked className="w-[210px] pt-[2px]" />
                <input aria-label="新工作表组" defaultValue="3" className="w-[160px] h-[30px] pl-[3px] pb-1 bg-white border border-[#aaa]" />
              </div>
              <Radio label="新工作薄" hotkey="W" className="mt-1 h-[30px]" />
            </div>

            <fieldset className="border border-[#dcdcdc] ml-[7px] mr-[11px] mt-[6px] pb-3 pl-[7px]">
              <legend className={LEGEND}>残差</legend>
              <div className="grid grid-cols-[224px_1fr] auto-rows-[25px] mt-[3px]">
                <Check label="残差" hotkey="R" checked />
                <Check label="残差图" hotkey="D" />
                <Check label="标准残差" hotkey="T" checked />
                <Check label="线性拟合图" hotkey="I" checked />
              </div>
            </fieldset>

            <fieldset className="border border-[#dcdcdc] ml-[7px] mr-[11px] mt-[6px] pb-[9px] pl-[7px]">
              <legend className={LEGEND}>正态分布</legend>
              <Check label="正态概率图" hotkey="N" className="h-[25px] mt-px" />
            </fieldset>
          </fieldset>
        </div>

        <div className="flex flex-col ml-auto w-[88px] pt-[5px]">
          <button type="button" className="h-[33px] pb-[2px] bg-[#e1e1e1] border-2 border-[#0078d7]">确定</button>
          <button type="button" className={clsx(DIALOG_BTN, "mt-[7px]")}>取消</button>
          <button type="button" className={clsx(DIALOG_BTN, "mt-[22px]")}>帮助(<u>H</u>)</button>
        </div>
      </div>
    </div>
  );
}

/* ---------- tutorial marks ---------- */

function Marks() {
  return (
    <div className="absolute left-[980px] top-[270px] w-[350px] h-[360px] pointer-events-none text-white">
      <svg className="absolute inset-0" viewBox="980 270 350 360" aria-hidden="true">
        <g fill="none" stroke="#fb3838" strokeWidth="3">
          <path d="M996.500 300.500h171v89h-171zM1011.500 541.500h54v41h-54zM1258.500 281.500h53v49h-53z" />
        </g>
        <g fill="#fb3838">
          <path d="M1107 392l19 4-5 4 58 44-2 4-56-42-3 3z" />
          <path d="M1074 573l19-3-1 5 42 14-2 3-42-11-2 4z" />
          <path d="M1289 332l4 19-5-2-22 63-3 3 17-68-4 1z" />
          <circle cx="1191" cy="449" r="13" />
          <circle cx="1142" cy="598" r="13" />
          <circle cx="1287" cy="409" r="13" />
        </g>
        <g fill="#fff" fontSize="16" textAnchor="middle">
          <text x="1191" y="454">1</text>
          <text x="1142" y="603">2</text>
          <text x="1287" y="414">3</text>
        </g>
        <path d="M1215 443v12l-6-6zM1166 592v12l-6-6z" fill="#5f5f5f" />
      </svg>
      <div className="absolute left-[235px] top-[158px] flex items-center w-[91px] h-[43px] pl-2 rounded-[3px] bg-[#5f5f5f] text-[20px] whitespace-nowrap">
        2000组
      </div>
      <div className="absolute left-[186px] top-[307px] flex items-center w-[144px] h-[43px] pl-2 rounded-[3px] bg-[#5f5f5f] text-[20px] whitespace-nowrap">
        设置表格名称
      </div>
    </div>
  );
}

/* ---------- status bar ---------- */

function StatusBar() {
  const [zoom, setZoom] = useState(50);
  return (
    <footer className="relative flex items-center h-[28px] shrink-0 pl-[10px] pr-[11px] bg-[#f3f2f1] border-t border-[#c6c6c6] border-b-2 border-b-[#444] text-[15px]">
      <span className="grow">就绪</span>
      <button type="button" aria-label="普通" className="flex items-center justify-center w-[50px] h-full bg-[#d2d0ce]">
        <svg className="w-[17px] h-4" viewBox="0 0 17 16" fill="none" stroke="#555" strokeWidth="1.400">
          <path d="M.7.7h15.600v14.600H.7zM1 5.500h15M1 10.500h15M6 1v14M11 1v14" />
        </svg>
      </button>
      <button type="button" aria-label="页面布局" className="flex items-center justify-center w-[50px] h-full">
        <svg className="w-[17px] h-4" viewBox="0 0 17 16" fill="none" stroke="#555" strokeWidth="1.400">
          <path d="M.7.7h15.600v14.600H.7zM4 3h9v10H4zM6 5.500h5M6 8h5M6 10.500h5" />
        </svg>
      </button>
      <button type="button" aria-label="分页预览" className="flex items-center justify-center w-[50px] h-full">
        <svg className="w-[17px] h-4" viewBox="0 0 17 16" fill="none" stroke="#555" strokeWidth="1.400">
          <path d="M.7.7h15.600v14.600H.7zM1 9h10V1M6 1v8" />
        </svg>
      </button>
      <button type="button" aria-label="缩小" className="ml-[7px] w-[9px] h-px bg-[#444]" />
      <input
        type="range"
        aria-label="缩放"
        value={zoom}
        onChange={(e) => setZoom(Number(e.target.value))}
        className="appearance-none w-[123px] h-px mx-[7px] bg-[#aaa] [&::-webkit-slider-thumb]:appearance-none [&::-webkit-slider-thumb]:w-[6px] [&::-webkit-slider-thumb]:h-[15px] [&::-webkit-slider-thumb]:bg-[#666]"
      />
      <button type="button" aria-label="放大" className="mr-[19px]">
        <svg className="w-[9px] h-[9px]" viewBox="0 0 9 9" stroke="#444"><path d="M0 4.500h9M4.500 0v9" /></svg>
      </button>
      <span className="w-[38px] text-right">100%</span>
      <span className="absolute right-[15px] -top-[2px] text-[19px] leading-[22px] text-[#777]/80 pointer-events-none whitespace-nowrap">
        CSDN @YouthBlood9
      </span>
    </footer>
  );
}

export default function App() {
  return (
    <div className={clsx("relative flex flex-col h-screen overflow-hidden bg-[#e6e6e6] text-[#444]", UI_FONT)}>
      <TitleBar />
      <div className="shrink-0 bg-[#f3f2f1]">
        <TabRow />
        <Ribbon />
      </div>
      <FormulaBar />
      <main className="flex grow min-h-0">
        <div className="flex flex-col grow min-w-0">
          <div className="flex grow min-h-0 pt-[11px]">
            <div className="relative grow min-w-0 overflow-hidden border-r border-[#9b9b9b]">
              <Sheet />
              <ScatterChart />
            </div>
            <div className="flex flex-col w-[19px] mx-[3px] mt-[3px] -mb-px shrink-0 bg-[#dadada]">
              <button type="button" aria-label="向上滚动" className={SCROLL_BTN}>
                <Triangle d="M0 8h10L5 2z" />
              </button>
              <div className="h-[21px] mt-px bg-white border border-[#ababab]" />
              <button type="button" aria-label="向下滚动" className={clsx(SCROLL_BTN, "mt-auto")}>
                <Triangle d="M0 2h10L5 8z" />
              </button>
            </div>
          </div>
          <SheetTabs />
        </div>
        <FormatPanel />
      </main>
      <StatusBar />
      <RegressionDialog />
      <Marks />
    </div>
  );
}
